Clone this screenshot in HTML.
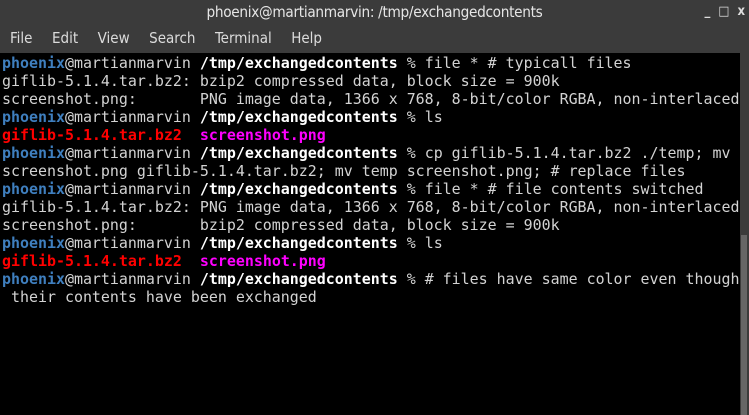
<!DOCTYPE html>
<html><head><style>
body{margin:0;width:749px;height:415px;background:#3b3b3b;overflow:hidden;position:relative;font-family:"DejaVu Sans Condensed","DejaVu Sans",sans-serif;}
.title{position:absolute;top:3px;left:0;width:749px;text-align:center;color:#e6e6e6;font-size:15.2px;letter-spacing:-0.3px;}
.btns{position:absolute;top:4px;right:4px;color:#ddd;font-size:13px;font-weight:bold;}
.menu{position:absolute;top:29px;left:10px;color:#dcdcdc;font-size:15px;}
.menu span{margin-right:19.5px;}
.term{position:absolute;left:0;top:53px;width:740px;height:362px;background:#000;}
.sb{position:absolute;left:740px;top:53px;width:9px;height:362px;background:#3b3b3b;}
.thumb{position:absolute;left:741px;top:235px;width:6px;height:180px;background:#666;}
pre{margin:0;position:absolute;left:2px;top:54px;font-family:"DejaVu Sans Mono",monospace;font-size:14.95px;line-height:18px;color:#d3d3d3;}
.p{color:#3f7fbf;font-weight:bold}.b{color:#fff;font-weight:bold}.r{color:#f00;font-weight:bold}.m{color:#f0f;font-weight:bold}
</style></head><body>
<div class="title">phoenix@martianmarvin: /tmp/exchangedcontents</div>
<div class="btns"><span style="margin-right:8px">_</span><span style="margin-right:8px">□</span><span>x</span></div>
<div class="menu"><span>File</span><span>Edit</span><span>View</span><span>Search</span><span>Terminal</span><span>Help</span></div>
<div class="term"></div><div class="sb"></div><div class="thumb"></div>
<pre><span class="p">phoenix</span>@martianmarvin <span class="b">/tmp/exchangedcontents</span> % file * # typicall files
giflib-5.1.4.tar.bz2: bzip2 compressed data, block size = 900k
screenshot.png:       PNG image data, 1366 x 768, 8-bit/color RGBA, non-interlaced
<span class="p">phoenix</span>@martianmarvin <span class="b">/tmp/exchangedcontents</span> % ls
<span class="r">giflib-5.1.4.tar.bz2</span>  <span class="m">screenshot.png</span>
<span class="p">phoenix</span>@martianmarvin <span class="b">/tmp/exchangedcontents</span> % cp giflib-5.1.4.tar.bz2 ./temp; mv
screenshot.png giflib-5.1.4.tar.bz2; mv temp screenshot.png; # replace files
<span class="p">phoenix</span>@martianmarvin <span class="b">/tmp/exchangedcontents</span> % file * # file contents switched
giflib-5.1.4.tar.bz2: PNG image data, 1366 x 768, 8-bit/color RGBA, non-interlaced
screenshot.png:       bzip2 compressed data, block size = 900k
<span class="p">phoenix</span>@martianmarvin <span class="b">/tmp/exchangedcontents</span> % ls
<span class="r">giflib-5.1.4.tar.bz2</span>  <span class="m">screenshot.png</span>
<span class="p">phoenix</span>@martianmarvin <span class="b">/tmp/exchangedcontents</span> % # files have same color even though
 their contents have been exchanged</pre>
</body></html>
